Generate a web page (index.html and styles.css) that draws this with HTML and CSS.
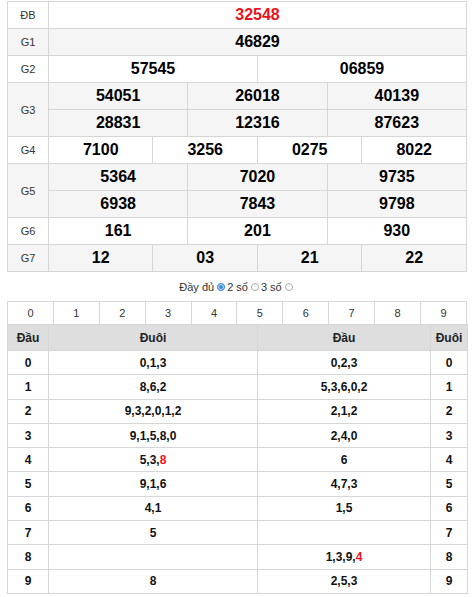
FILE: index.html
```html
<!DOCTYPE html>
<html lang="vi">
<head>
<meta charset="utf-8">
<title>KQ</title>
<link rel="stylesheet" href="styles.css">
</head>
<body>
<div class="wrap">
  <table class="kq">
    <colgroup>
      <col class="c-lbl">
      <col><col><col><col><col><col><col><col><col><col><col><col>
    </colgroup>
    <tr class="w"><td class="l">ĐB</td><td colspan="12" class="n db">32548</td></tr>
    <tr class="g"><td class="l">G1</td><td colspan="12" class="n">46829</td></tr>
    <tr class="w"><td class="l">G2</td><td colspan="6" class="n">57545</td><td colspan="6" class="n">06859</td></tr>
    <tr class="g"><td class="l" rowspan="2">G3</td><td colspan="4" class="n">54051</td><td colspan="4" class="n">26018</td><td colspan="4" class="n">40139</td></tr>
    <tr class="g"><td colspan="4" class="n">28831</td><td colspan="4" class="n">12316</td><td colspan="4" class="n">87623</td></tr>
    <tr class="w"><td class="l">G4</td><td colspan="3" class="n">7100</td><td colspan="3" class="n">3256</td><td colspan="3" class="n">0275</td><td colspan="3" class="n">8022</td></tr>
    <tr class="g"><td class="l" rowspan="2">G5</td><td colspan="4" class="n">5364</td><td colspan="4" class="n">7020</td><td colspan="4" class="n">9735</td></tr>
    <tr class="g"><td colspan="4" class="n">6938</td><td colspan="4" class="n">7843</td><td colspan="4" class="n">9798</td></tr>
    <tr class="w"><td class="l">G6</td><td colspan="4" class="n">161</td><td colspan="4" class="n">201</td><td colspan="4" class="n">930</td></tr>
    <tr class="g"><td class="l">G7</td><td colspan="3" class="n">12</td><td colspan="3" class="n">03</td><td colspan="3" class="n">21</td><td colspan="3" class="n">22</td></tr>
  </table>

  <div class="opts">Đầy đủ<span class="rd on"></span>2 số<span class="rd"></span>3 số<span class="rd"></span></div>

  <table class="digits">
    <tr><td>0</td><td>1</td><td>2</td><td>3</td><td>4</td><td>5</td><td>6</td><td>7</td><td>8</td><td>9</td></tr>
  </table>

  <table class="loto">
    <colgroup>
      <col class="c1"><col class="c2"><col class="c3"><col class="c4">
    </colgroup>
    <tr class="hd"><th>Đầu</th><th>Đuôi</th><th>Đầu</th><th>Đuôi</th></tr>
    <tr><td>0</td><td>0,1,3</td><td>0,2,3</td><td>0</td></tr>
    <tr><td>1</td><td>8,6,2</td><td>5,3,6,0,2</td><td>1</td></tr>
    <tr><td>2</td><td>9,3,2,0,1,2</td><td>2,1,2</td><td>2</td></tr>
    <tr><td>3</td><td>9,1,5,8,0</td><td>2,4,0</td><td>3</td></tr>
    <tr><td>4</td><td>5,3,<span class="red">8</span></td><td>6</td><td>4</td></tr>
    <tr><td>5</td><td>9,1,6</td><td>4,7,3</td><td>5</td></tr>
    <tr><td>6</td><td>4,1</td><td>1,5</td><td>6</td></tr>
    <tr><td>7</td><td>5</td><td></td><td>7</td></tr>
    <tr><td>8</td><td></td><td>1,3,9,<span class="red">4</span></td><td>8</td></tr>
    <tr><td>9</td><td>8</td><td>2,5,3</td><td>9</td></tr>
  </table>
</div>
</body>
</html>
```

FILE: styles.css
```css
html, body {
  margin: 0;
  padding: 0;
  background: #fff;
}

body {
  font-family: "Liberation Sans", Arial, sans-serif;
  color: #111;
}

.wrap {
  width: 460px;
  padding: 1px 0 0 7px;
}

table {
  border-collapse: collapse;
  width: 460px;
  table-layout: fixed;
}

td, th {
  border: 1px solid #d6d6d6;
  padding: 0;
  text-align: center;
  vertical-align: middle;
}

/* results table */
.kq .c-lbl { width: 41px; }

.kq td {
  height: 26px;
}

.kq tr.w td { background: #fff; }
.kq tr.g td { background: #f5f5f5; }

.kq .l {
  font-size: 11px;
  color: #333;
}

.kq .n {
  font-size: 16px;
  font-weight: bold;
  color: #000;
}

.kq .db {
  color: #e8141c;
}

/* options line */
.opts {
  height: 29px;
  display: flex;
  align-items: center;
  justify-content: center;
  font-size: 11px;
  color: #333;
  padding-top: 1px;
  box-sizing: border-box;
}

.rd {
  display: inline-block;
  width: 8px;
  height: 8px;
  border: 1px solid #aaa;
  border-radius: 50%;
  margin: 0 2px 0 3px;
  box-sizing: border-box;
  background: #fff;
}

.rd.on {
  border-color: #3b86d9;
  background: #3b8ae3;
  box-shadow: inset 0 0 0 1px #d9e8f8;
}

/* digits row */
.digits td {
  height: 22px;
  font-size: 11px;
  color: #333;
}

/* loto table */
.loto {
  margin-top: -1px;
}

.loto .c1 { width: 41px; }
.loto .c2 { width: 209px; }
.loto .c3 { width: 173px; }
.loto .c4 { width: 37px; }

.loto th {
  background: #dedede;
  height: 25px;
  font-size: 12px;
  font-weight: bold;
  color: #222;
}

.loto td {
  height: 23.3px;
  font-size: 12px;
  font-weight: bold;
  color: #111;
}

.red {
  color: #e8141c;
}
```
